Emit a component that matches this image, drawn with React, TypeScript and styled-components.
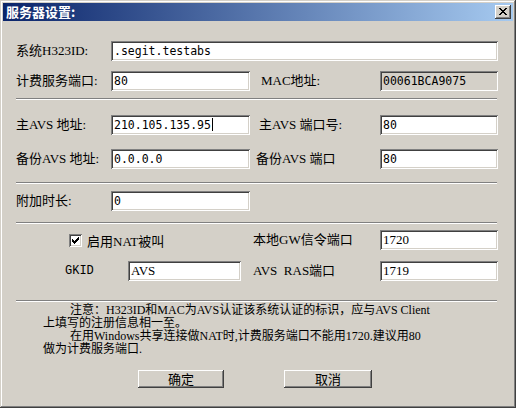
import React from "react";
import styled, { createGlobalStyle } from "styled-components";

const GlobalStyle = createGlobalStyle`
  html, body {
    margin: 0;
    padding: 0;
    background: #d4d0c8;
  }
  body {
    font-family: "Liberation Serif", "Noto Sans CJK SC", serif;
    font-size: 13px;
    color: #000;
  }
  * {
    box-sizing: border-box;
  }
`;

const Window = styled.div`
  width: 516px;
  height: 408px;
  padding: 3px;
  background: #d4d0c8;
  box-shadow: inset -1px -1px #404040, inset 1px 1px #d4d0c8,
    inset -2px -2px #808080, inset 2px 2px #ffffff;
  display: flex;
  flex-direction: column;
`;

const TitleBar = styled.div`
  height: 18px;
  display: flex;
  align-items: center;
  padding: 0 2px 0 3px;
  background: linear-gradient(to right, #0a246a, #a6caf0);
`;

const Title = styled.span`
  flex: 1;
  color: #fff;
  font-family: "Noto Sans CJK SC", sans-serif;
  font-weight: bold;
  font-size: 13px;
  line-height: 18px;
`;

const CloseButton = styled.button`
  width: 16px;
  height: 14px;
  padding: 0 0 1px 0;
  border: none;
  background: #d4d0c8;
  box-shadow: inset -1px -1px #404040, inset 1px 1px #ffffff,
    inset -2px -2px #808080, inset 2px 2px #d4d0c8;
  display: flex;
  align-items: center;
  justify-content: center;
`;

const Body = styled.div`
  flex: 1;
  display: flex;
  flex-direction: column;
  padding: 20px 15px 0 13px;
`;

const FieldRow = styled.div<{ $top: number; $cols?: string }>`
  display: grid;
  grid-template-columns: ${(p) => p.$cols ?? "95px 139px 130px 118px"};
  align-items: center;
  height: 20px;
  margin-top: ${(p) => p.$top}px;
`;

const Label = styled.span<{ $indent?: number; $mono?: boolean }>`
  padding-left: ${(p) => p.$indent ?? 0}px;
  white-space: nowrap;
  line-height: 20px;
  font-family: ${(p) =>
    p.$mono
      ? `"Liberation Mono", "Noto Sans CJK SC", monospace`
      : `"Liberation Serif", "Noto Sans CJK SC", serif`};
  font-size: ${(p) => (p.$mono ? 12 : 13)}px;
`;

const Edit = styled.div<{ $readOnly?: boolean; $serif?: boolean; $span?: string }>`
  grid-column: ${(p) => p.$span ?? "auto"};
  height: 20px;
  padding: 0 3px;
  background: ${(p) => (p.$readOnly ? "#d4d0c8" : "#ffffff")};
  box-shadow: inset 1px 1px #808080, inset -1px -1px #ffffff,
    inset 2px 2px #404040, inset -2px -2px #d4d0c8;
  white-space: nowrap;
  overflow: hidden;
  line-height: 20px;
  font-family: ${(p) =>
    p.$serif ? `"Liberation Serif", serif` : `"DejaVu Sans Mono", monospace`};
  font-size: ${(p) => (p.$serif ? 13 : 11.5)}px;
`;

const Caret = styled.span`
  display: inline-block;
  width: 1px;
  height: 13px;
  margin-left: 1px;
  background: #000;
  vertical-align: -2px;
`;

const Separator = styled.hr<{ $top: number }>`
  width: 481px;
  height: 2px;
  margin: ${(p) => p.$top}px 0 0;
  border: none;
  border-top: 1px solid #808080;
  border-bottom: 1px solid #ffffff;
`;

const CheckLabel = styled.label<{ $indent: number }>`
  grid-column: 1 / 3;
  display: flex;
  align-items: center;
  gap: 5px;
  padding-left: ${(p) => p.$indent}px;
  white-space: nowrap;
`;

const CheckBox = styled.span`
  width: 13px;
  height: 13px;
  background: #ffffff;
  box-shadow: inset 1px 1px #808080, inset -1px -1px #ffffff,
    inset 2px 2px #404040, inset -2px -2px #d4d0c8;
  display: flex;
  align-items: center;
  justify-content: center;
`;

const Note = styled.div`
  margin-top: 2px;
  padding-left: 27px;
  font-size: 12px;
  line-height: 13px;
`;

const NoteLine = styled.div<{ $indent?: boolean }>`
  white-space: nowrap;
  padding-left: ${(p) => (p.$indent ? 27 : 0)}px;
`;

const ButtonRow = styled.div`
  display: flex;
  gap: 60px;
  margin-top: 14px;
  padding-left: 122px;
`;

const Button = styled.button<{ $width: number }>`
  width: ${(p) => p.$width}px;
  height: 18px;
  padding: 0;
  border: none;
  background: #d4d0c8;
  box-shadow: inset -1px -1px #404040, inset 1px 1px #ffffff,
    inset -2px -2px #808080, inset 2px 2px #d4d0c8;
  font-family: "Noto Sans CJK SC", sans-serif;
  font-size: 13px;
  line-height: 18px;
  color: #000;
`;

const xPixels = [
  [0, 0], [1, 0], [6, 0], [7, 0],
  [1, 1], [2, 1], [5, 1], [6, 1],
  [2, 2], [3, 2], [4, 2], [5, 2],
  [3, 3], [4, 3],
  [2, 4], [3, 4], [4, 4], [5, 4],
  [1, 5], [2, 5], [5, 5], [6, 5],
  [0, 6], [1, 6], [6, 6], [7, 6],
];

const checkPixels = [
  [6, 0],
  [5, 1], [6, 1],
  [0, 2], [4, 2], [5, 2], [6, 2],
  [0, 3], [1, 3], [3, 3], [4, 3], [5, 3],
  [0, 4], [1, 4], [2, 4], [3, 4], [4, 4],
  [1, 5], [2, 5], [3, 5],
  [2, 6],
];

const PixelIcon = ({ pixels, w, h }: { pixels: number[][]; w: number; h: number }) => (
  <svg width={w} height={h} viewBox={`0 0 ${w} ${h}`} shapeRendering="crispEdges">
    {pixels.map(([x, y]) => (
      <rect key={`${x}-${y}`} x={x} y={y} width={1} height={1} fill="#000" />
    ))}
  </svg>
);

const natCols = "112px 113px 139px 118px";

const App = () => {
  return (
    <>
      <GlobalStyle />
      <Window>
        <TitleBar>
          <Title>服务器设置:</Title>
          <CloseButton aria-label="关闭">
            <PixelIcon pixels={xPixels} w={8} h={7} />
          </CloseButton>
        </TitleBar>
        <Body>
          <FieldRow $top={0}>
            <Label>系统H323ID:</Label>
            <Edit $span="2 / 5">.segit.testabs</Edit>
          </FieldRow>
          <FieldRow $top={10}>
            <Label>计费服务端口:</Label>
            <Edit>80</Edit>
            <Label $indent={11}>MAC地址:</Label>
            <Edit $readOnly>00061BCA9075</Edit>
          </FieldRow>

          <Separator $top={7} />

          <FieldRow $top={15}>
            <Label>主AVS 地址:</Label>
            <Edit>
              210.105.135.95
              <Caret />
            </Edit>
            <Label $indent={9}>主AVS 端口号:</Label>
            <Edit>80</Edit>
          </FieldRow>
          <FieldRow $top={14}>
            <Label>备份AVS 地址:</Label>
            <Edit>0.0.0.0</Edit>
            <Label $indent={6}>备份AVS 端口</Label>
            <Edit>80</Edit>
          </FieldRow>

          <Separator $top={13} />

          <FieldRow $top={7}>
            <Label>附加时长:</Label>
            <Edit>0</Edit>
          </FieldRow>

          <Separator $top={11} />

          <FieldRow $top={6} $cols={natCols}>
            <CheckLabel $indent={53}>
              <CheckBox>
                <PixelIcon pixels={checkPixels} w={7} h={7} />
              </CheckBox>
              启用NAT被叫
            </CheckLabel>
            <Label $indent={12}>本地GW信令端口</Label>
            <Edit $serif>1720</Edit>
          </FieldRow>
          <FieldRow $top={11} $cols={natCols}>
            <Label $indent={49} $mono>GKID</Label>
            <Edit $serif>AVS</Edit>
            <Label $indent={12}>AVS&nbsp;&nbsp;RAS端口</Label>
            <Edit $serif>1719</Edit>
          </FieldRow>

          <Separator $top={19} />

          <Note>
            <NoteLine $indent>注意：H323ID和MAC为AVS认证该系统认证的标识，应与AVS Client</NoteLine>
            <NoteLine>上填写的注册信息相一至。</NoteLine>
            <NoteLine $indent>在用Windows共享连接做NAT时,计费服务端口不能用1720.建议用80</NoteLine>
            <NoteLine>做为计费服务端口.</NoteLine>
          </Note>

          <ButtonRow>
            <Button $width={86}>确定</Button>
            <Button $width={88}>取消</Button>
          </ButtonRow>
        </Body>
      </Window>
    </>
  );
};

export default App;
